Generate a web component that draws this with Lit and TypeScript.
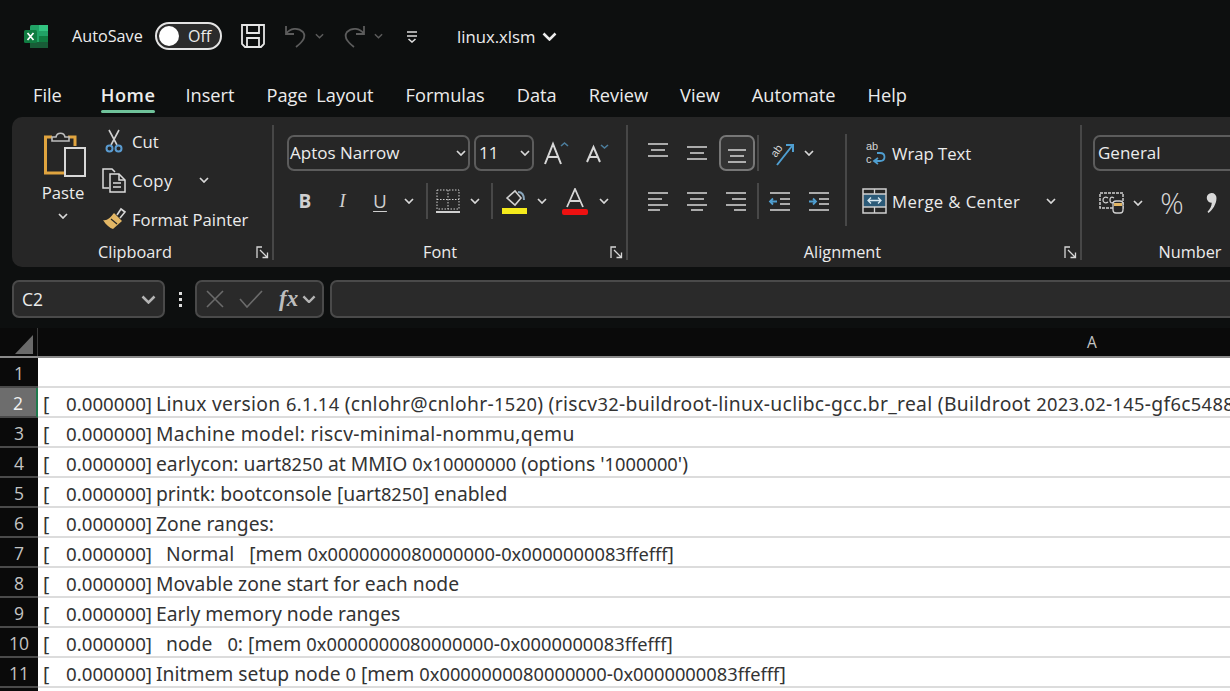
import { LitElement, html, css, svg } from 'lit';
import { customElement } from 'lit/decorators.js';

const TABS = ['File', 'Home', 'Insert', 'Page Layout', 'Formulas', 'Data', 'Review', 'View', 'Automate', 'Help'];

const ROWS = [
  '',
  'Linux version 6.1.14 (cnlohr@cnlohr-1520) (riscv32-buildroot-linux-uclibc-gcc.br_real (Buildroot 2023.02-145-gf6c5488',
  'Machine model: riscv-minimal-nommu,qemu',
  "earlycon: uart8250 at MMIO 0x10000000 (options '1000000')",
  'printk: bootconsole [uart8250] enabled',
  'Zone ranges:',
  '  Normal   [mem 0x0000000080000000-0x0000000083ffefff]',
  'Movable zone start for each node',
  'Early memory node ranges',
  '  node   0: [mem 0x0000000080000000-0x0000000083ffefff]',
  'Initmem setup node 0 [mem 0x0000000080000000-0x0000000083ffefff]',
];

const chev = (w = 10) => html`<svg class="chev" width=${w} height=${w * 0.6} viewBox="0 0 10 6"><path d="M1 1l4 4 4-4" fill="none" stroke="currentColor" stroke-width="1.7"/></svg>`;

const launcher = html`<svg class="launch" width="13" height="13" viewBox="0 0 13 13" fill="none" stroke="#d6d6d6" stroke-width="1.3"><path d="M6 1H1v5M1 1v11h0M4 4l7 7M6.5 11.5h5v-5"/></svg>`;

// lines of the alignment icons, y/width pairs per icon
const lines = (rows: number[][]) => html`<svg width="24" height="24" viewBox="0 0 24 24" stroke="#d8d8d8" stroke-width="1.6">${rows.map(
  ([y, x1, x2]) => svg`<line x1=${x1} x2=${x2} y1=${y} y2=${y}/>`
)}</svg>`;

const arrowLines = (flip: boolean) => html`<svg width="24" height="24" viewBox="0 0 24 24" stroke="#d8d8d8" stroke-width="1.6" fill="none">
  <line x1="2" x2="22" y1="4" y2="4"/><line x1="12" x2="22" y1="10" y2="10"/><line x1="12" x2="22" y1="15" y2="15"/><line x1="2" x2="22" y1="21" y2="21"/>
  <path d=${flip ? 'M2 12.5h7M6 9.5l3 3-3 3' : 'M9 12.5H2M5 9.5l-3 3 3 3'} stroke="#4f9ed0" stroke-width="1.8"/>
</svg>`;

// digits run narrower than letters in the sheet font
const cellText = (s: string) =>
  s.split(/(0x[0-9a-f]+|\d[\d.]*)/).map((part, i) => (i % 2 ? html`<span class="num">${part}</span>` : part));

@customElement('app-root')
export class AppRoot extends LitElement {
  static styles = css`
    :host {
      display: block;
      width: 1230px;
      height: 691px;
      overflow: hidden;
      background: #0d0f0f;
      color: #ececec;
      font-family: "Open Sans", "Noto Sans", sans-serif;
    }
    svg { display: block; flex: none; }
    .chev { color: #d8d8d8; }

    /* title bar */
    .title {
      height: 72px;
      display: flex;
      align-items: center;
      padding-left: 24px;
      box-sizing: border-box;
    }
    .autosave { font-size: 16.2px; margin-left: 23px; width: 83px; }
    .toggle {
      width: 67px;
      height: 28px;
      border: 2px solid #e4e4e4;
      border-radius: 15px;
      box-sizing: border-box;
      background: #2b2b2b;
      display: flex;
      align-items: center;
      padding-left: 2px;
      font-size: 16px;
    }
    .knob { width: 20px; height: 20px; border-radius: 50%; background: #fff; margin-right: 9px; }
    .save { margin-left: 18px; }
    .undo { margin-left: 18px; }
    .qchev { margin-left: 8px; color: #5c5c5c; }
    .redo { margin-left: 19px; }
    .qat { margin-left: 23px; }
    .file { margin-left: 39px; font-size: 16.7px; }
    .file + svg { margin-left: 7px; color: #ececec; }

    /* tabs */
    .tabs {
      height: 43px;
      display: flex;
      padding-left: 33px;
      gap: 32px;
      font-size: 18.2px;
      word-spacing: 4px;
      align-items: center;
      box-sizing: border-box;
      padding-top: 2px;
    }
    .tab { position: relative; line-height: 24px; }
    .tab.on { font-weight: 600; margin: 0 -2px 0 7px; letter-spacing: 0.5px; }
    .tab.on::after {
      content: '';
      position: absolute;
      left: 0;
      right: 0;
      bottom: -6px;
      height: 3px;
      border-radius: 2px;
      background: #6fc29a;
    }

    /* ribbon */
    .ribbon {
      margin: 2px 0 0 12px;
      height: 150px;
      box-sizing: border-box;
      padding: 8px 0 7px;
      background: #262626;
      border-radius: 10px 0 0 10px;
      display: flex;
      overflow: hidden;
      font-size: 16.7px;
    }
    .group {
      flex: none;
      height: 135px;
      box-sizing: border-box;
      border-right: 2px solid #474747;
      display: flex;
      flex-direction: column;
    }
    .g-clip { width: 262px; }
    .g-font { width: 354px; }
    .g-align { width: 454px; }
    .g-num { width: 216px; border-right: 0; }
    .body { height: 119px; flex: none; display: flex; box-sizing: border-box; }
    .foot { display: flex; align-items: center; height: 16px; font-size: 16.3px; font-weight: 500; }
    .foot span { flex: 1; text-align: center; }
    .foot svg { margin-right: 3px; }
    .g-clip .foot { padding-left: 2px; }
    .g-font .foot span { margin-right: 4px; }
    .g-align .foot span { margin-right: 7px; }

    /* clipboard */
    .g-clip .body { padding-left: 24px; }
    .paste {
      width: 54px;
      display: flex;
      flex-direction: column;
      align-items: center;
      padding-top: 6px;
    }
    .paste svg:first-child { margin-left: 4px; }
    .paste span { line-height: 20px; margin: 6px 0 10px; }
    .clip-list {
      margin-left: 10px;
      padding-top: 1px;
      display: flex;
      flex-direction: column;
      gap: 9px;
    }
    .clip-row { height: 30px; display: flex; align-items: center; white-space: nowrap; }
    .clip-ico { width: 32px; display: flex; justify-content: center; flex: none; margin: 0 2px 0 -2px; }
    .clip-row .chev { margin-left: 26px; }
    .copy { letter-spacing: 0.4px; }

    /* font */
    .g-font .body, .g-num .body { flex-direction: column; padding: 10px 0 0 13px; }
    .g-font .top { display: grid; grid-template-columns: 183px 64px 44px 38px; height: 36px; gap: 0; }
    .combo {
      height: 36px;
      box-sizing: border-box;
      border: 2px solid #5c5c5c;
      border-radius: 7px;
      display: flex;
      align-items: center;
      justify-content: space-between;
      padding: 0 2px 2px 1px;
      font-size: 17px;
      overflow: hidden;
      white-space: nowrap;
    }
    .combo .chev { margin-top: 2px; }
    .combo.size { margin-left: 4px; padding-left: 3px; }
    .cell { display: flex; align-items: center; justify-content: center; }
    .font-row {
      margin-top: 12px;
      height: 36px;
      display: grid;
      grid-template-columns: 36px 39px 36px 22px 14px 28px 25px 10px 34px 22px 44px 14px;
    }
    .fmt { font-size: 19px; color: #cfcfcf; font-family: "Liberation Serif", serif; }
    .bold { font-family: "Open Sans", sans-serif; font-weight: 700; }
    .ital { font-style: italic; font-family: "Liberation Serif", serif; }
    .und { font-family: "Open Sans", sans-serif; font-weight: 400; text-decoration: underline; text-underline-offset: 3px; }
    .vsep { width: 2px; height: 36px; background: #484848; }

    /* alignment */
    .g-align .body { padding: 10px 0 0 10px; }
    .align-rows { width: 200px; display: flex; flex-direction: column; gap: 12px; }
    .a1 { display: grid; height: 36px; grid-template-columns: 40px 38px 40px 4px 42px 14px; }
    .a2 { display: grid; height: 36px; grid-template-columns: 40px 38px 40px 4px 40px 38px; }
    .boxed {
      border: 2px solid #777;
      border-radius: 7px;
      background: #333;
      width: 36px;
      height: 36px;
      box-sizing: border-box;
      margin-left: 1px;
    }
    .bigsep { width: 2px; height: 92px; margin: -1px 0 0 7px; background: #484848; }
    .wrap-col { margin-left: 15px; display: flex; flex-direction: column; gap: 12px; width: 202px; }
    .wrap-row { height: 36px; display: flex; align-items: center; white-space: nowrap; }
    .wrap-row svg:first-child { margin-right: 5px; }
    .wrap-row .chev { margin-left: auto; margin-right: 8px; }
    .wrap-first { padding-left: 3px; }
    .merge { letter-spacing: 0.4px; }
    .ic-text { font: 400 11px "Liberation Sans", sans-serif; fill: #d4d4d4; }

    /* number */
    .g-num .body { padding-left: 11px; }
    .g-num .combo { width: 220px; padding-left: 3px; }
    .num-row { margin-top: 12px; height: 36px; display: grid; grid-template-columns: 36px 18px 50px 28px; }
    .pct { font-size: 29px; color: #d8d8d8; font-weight: 300; }

    /* formula bar */
    .fbar { display: flex; height: 38px; margin-top: 13px; padding-left: 12px; }
    .box {
      border: 2px solid #4a4a4a;
      border-radius: 7px;
      background: #2a2a2a;
      box-sizing: border-box;
      display: flex;
      align-items: center;
    }
    .name { width: 153px; justify-content: space-between; padding: 0 7px 0 8px; font-size: 17.5px; }
    .fbar .chev { color: #b4b4b4; }
    .dots { width: 30px; display: flex; flex-direction: column; align-items: center; justify-content: center; gap: 3px; }
    .dots i { width: 3px; height: 3px; background: #ddd; }
    .fx { width: 129px; padding: 0 3px 0 8px; }
    .fx-check { margin-left: 14px; }
    .fx-label { font: italic 700 23px "Liberation Serif", serif; color: #bdbdbd; margin: 0 3px 0 16px; width: 20px; }
    .finput { flex: 1; margin: 0 -10px 0 6px; }

    /* sheet */
    .colhead {
      margin-top: 10px;
      height: 30px;
      box-sizing: border-box;
      background: #0a0a0a;
      border-bottom: 2px solid #8a8a8a;
      display: flex;
    }
    .corner {
      width: 38px;
      flex: none;
      border-right: 1px solid #3c3c3c;
      display: flex;
      align-items: flex-end;
      justify-content: flex-end;
      padding-bottom: 2px;
      box-sizing: border-box;
    }
    .corner svg { margin-right: 4px; }
    .col-a { flex: none; width: 2108px; text-align: center; color: #c4c4c4; font-size: 15.5px; line-height: 29px; }
    .row { height: 30px; display: flex; background: #fff; }
    .rh {
      width: 38px;
      flex: none;
      box-sizing: border-box;
      background: #0a0a0a;
      border-bottom: 2px solid #4a4a4a;
      color: #c4c4c4;
      font-size: 17.5px;
      line-height: 31px;
      text-align: center;
    }
    .row.sel .rh {
      background: #6d6d6d;
      color: #f2f2f2;
      border-right: 2px solid #1f7a4d;
    }
    .cellrow {
      flex: 1;
      display: flex;
      box-sizing: border-box;
      border-bottom: 2px solid #dcdcdc;
      color: #333;
      font: 19.3px/31px "Noto Sans", sans-serif;
      white-space: pre;
      overflow: hidden;
      padding-left: 5px;
    }
    .br { width: 23px; flex: none; }
    .ts { width: 90px; flex: none; font-size: 18.7px; }
    .num { font-size: 18.3px; }
    .wide { letter-spacing: 0.31px; }
  `;

  render() {
    return html`
      ${this.renderTitle()}
      <div class="tabs">
        ${TABS.map(t => html`<div class="tab ${t === 'Home' ? 'on' : ''}">${t}</div>`)}
      </div>
      <div class="ribbon">
        ${this.renderClipboard()}
        ${this.renderFont()}
        ${this.renderAlignment()}
        ${this.renderNumber()}
      </div>
      ${this.renderFormulaBar()}
      <div class="colhead">
        <div class="corner"><svg width="18" height="19" viewBox="0 0 18 19"><path d="M18 0v19H0z" fill="#6a6a6a"/></svg></div>
        <div class="col-a">A</div>
      </div>
      ${ROWS.map((r, i) => html`
        <div class="row ${i === 1 ? 'sel' : ''}">
          <div class="rh">${i + 1}</div>
          <div class="cellrow">${r ? html`<span class="br">[</span><span class="ts">0.000000]</span><span class=${r.includes('riscv') ? 'wide' : ''}>${cellText(r)}</span>` : ''}</div>
        </div>
      `)}
      <div class="row"><div class="rh"></div><div class="cellrow"></div></div>
    `;
  }

  renderTitle() {
    return html`
      <div class="title">
        <svg width="25" height="25" viewBox="0 0 25 25">
          <rect x="6" y="1" width="18" height="23" rx="1.5" fill="#21a366"/>
          <rect x="15" y="1" width="9" height="6" fill="#33c481"/>
          <rect x="15" y="12" width="9" height="6" fill="#107c41"/>
          <rect x="6" y="18" width="18" height="6" fill="#185c37"/>
          <rect x="0" y="6" width="13" height="13" rx="1.5" fill="#107c41"/>
          <path d="M3.5 9l6 7M9.5 9l-6 7" stroke="#fff" stroke-width="1.7"/>
        </svg>
        <div class="autosave">AutoSave</div>
        <div class="toggle"><div class="knob"></div>Off</div>
        <svg class="save" width="26" height="26" viewBox="0 0 26 26" fill="none" stroke="#e6e6e6" stroke-width="1.8">
          <path d="M2 2h22v19l-3 3H5l-3-3z"/><path d="M7 2v8h12V2M7 24v-9h12v9"/>
        </svg>
        <svg class="undo" width="23" height="24" viewBox="0 0 23 24" fill="none" stroke="#5c5c5c" stroke-width="1.8">
          <path d="M2 2v8h8M2 10c4-6 12-7 17-2 3 4 1 9-7 15"/>
        </svg>
        <svg class="qchev" width="9" height="6" viewBox="0 0 10 6"><path d="M1 1l4 4 4-4" fill="none" stroke="#5c5c5c" stroke-width="1.6"/></svg>
        <svg class="redo" width="23" height="24" viewBox="0 0 23 24" fill="none" stroke="#5c5c5c" stroke-width="1.8">
          <path d="M21 2v8h-8M21 10c-4-6-12-7-17-2-3 4-1 9 7 15"/>
        </svg>
        <svg class="qchev" width="9" height="6" viewBox="0 0 10 6"><path d="M1 1l4 4 4-4" fill="none" stroke="#5c5c5c" stroke-width="1.6"/></svg>
        <svg class="qat" width="12" height="13" viewBox="0 0 12 13" fill="none" stroke="#dcdcdc" stroke-width="1.6">
          <path d="M1 2h10M1 6h10M2.5 9l3.5 3 3.5-3"/>
        </svg>
        <div class="file">linux.xlsm</div>
        ${chev(15)}
      </div>
    `;
  }

  renderClipboard() {
    return html`
      <div class="group g-clip">
        <div class="body">
          <div class="paste">
            <svg width="42" height="46" viewBox="0 0 42 46" fill="none">
              <path d="M8 6H1.5v36H22" stroke="#e0a43f" stroke-width="3"/>
              <path d="M24 6h7v9" stroke="#e0a43f" stroke-width="3"/>
              <path d="M8 10V6h4c1-5 8-5 9 0h4v4z" stroke="#bdbdbd" stroke-width="1.6" fill="#262626"/>
              <rect x="21" y="17" width="20" height="28" stroke="#d8d8d8" stroke-width="2"/>
            </svg>
            <span>Paste</span>
            ${chev()}
          </div>
          <div class="clip-list">
            <div class="clip-row">
              <div class="clip-ico">
                <svg width="18" height="24" viewBox="0 0 18 24" fill="none">
                  <path d="M4 1l8 15M14 1L6 16" stroke="#cfcfcf" stroke-width="1.6"/>
                  <circle cx="4.5" cy="19.5" r="3" stroke="#5a9bd0" stroke-width="2"/>
                  <circle cx="13.5" cy="19.5" r="3" stroke="#5a9bd0" stroke-width="2"/>
                </svg>
              </div>Cut
            </div>
            <div class="clip-row">
              <div class="clip-ico">
                <svg width="26" height="26" viewBox="0 0 26 26" fill="none" stroke="#dcdcdc" stroke-width="1.5">
                  <path d="M8 21H2V2h9l3 3"/><path d="M9 7h9l6 6v12H9z"/><path d="M18 7v6h6M12 16h8M12 20h8"/>
                </svg>
              </div><span class="copy">Copy</span> ${chev()}
            </div>
            <div class="clip-row">
              <div class="clip-ico">
                <svg width="25" height="24" viewBox="0 0 25 24" fill="none">
                  <path d="M15 8l4-6 4 3-5 6" stroke="#d6d6d6" stroke-width="1.6"/>
                  <path d="M12 6l8 8-9 8c-3-1-7-4-10-9 4 1 7-2 11-7z" fill="#e3b765"/>
                  <path d="M9 12l6 5" stroke="#262626" stroke-width="1.2"/>
                </svg>
              </div>Format Painter
            </div>
          </div>
        </div>
        <div class="foot"><span>Clipboard</span>${launcher}</div>
      </div>
    `;
  }

  renderFont() {
    return html`
      <div class="group g-font">
        <div class="body">
          <div class="top">
            <div class="combo">Aptos Narrow ${chev()}</div>
            <div class="combo size">11 ${chev()}</div>
            <div class="cell">
              <svg width="25" height="24" viewBox="0 0 25 24" fill="none">
                <path d="M1 23L9 3l8 20M4 16h10" stroke="#d6d6d6" stroke-width="2"/>
                <path d="M17 5l3.500-3 3.500 3" stroke="#4c7d9c" stroke-width="1.6"/>
              </svg>
            </div>
            <div class="cell">
              <svg width="23" height="20" viewBox="0 0 23 20" fill="none">
                <path d="M1 19L7.500 4 14 19M3.500 14h8" stroke="#d6d6d6" stroke-width="2"/>
                <path d="M15 2l3.500 3L22 2" stroke="#4c7d9c" stroke-width="1.600"/>
              </svg>
            </div>
          </div>
          <div class="font-row">
            <div class="cell fmt bold">B</div>
            <div class="cell fmt ital">I</div>
            <div class="cell fmt und">U</div>
            <div class="cell">${chev()}</div>
            <div class="cell"><div class="vsep"></div></div>
            <div class="cell">
              <svg width="24" height="24" viewBox="0 0 24 24" fill="none" stroke="#cfcfcf">
                <rect x="1" y="1" width="22" height="19" stroke-dasharray="1.500 1.500"/>
                <path d="M12 1v19M1 10.500h22" stroke-dasharray="1.500 1.500"/>
                <path d="M0 23h24" stroke-width="2"/>
              </svg>
            </div>
            <div class="cell">${chev()}</div>
            <div class="cell"><div class="vsep"></div></div>
            <div class="cell">
              <svg width="25" height="26" viewBox="0 0 25 26" fill="none">
                <path d="M5 10l8-7 6 7-6 7z" stroke="#cfcfcf" stroke-width="1.600"/>
                <path d="M16 4c4 0 6 3 6 8" stroke="#8aa6bb" stroke-width="2"/>
                <rect y="20" width="25" height="6" fill="#f4ea1c"/>
              </svg>
            </div>
            <div class="cell">${chev()}</div>
            <div class="cell">
              <svg width="26" height="27" viewBox="0 0 26 27" fill="none">
                <path d="M5 19L13 1l8 18M7.500 13h11" stroke="#d6d6d6" stroke-width="1.800"/>
                <rect y="21" width="26" height="6" rx="2" fill="#ee1111"/>
              </svg>
            </div>
            <div class="cell">${chev()}</div>
          </div>
        </div>
        <div class="foot"><span>Font</span>${launcher}</div>
      </div>
    `;
  }

  renderAlignment() {
    return html`
      <div class="group g-align">
        <div class="body">
          <div class="align-rows">
            <div class="a1">
              <div class="cell">${lines([[3, 2, 22], [9, 5, 19], [15, 2, 22]])}</div>
              <div class="cell">${lines([[6, 2, 22], [12, 5, 19], [18, 2, 22]])}</div>
              <div class="cell"><div class="boxed cell">${lines([[9, 3, 21], [15, 5, 19], [21, 3, 21]])}</div></div>
              <div class="cell"><div class="vsep"></div></div>
              <div class="cell">
                <svg width="28" height="26" viewBox="0 0 28 26" fill="none">
                  <path d="M10 25L25 6M19 5h7v7" stroke="#4f9ed0" stroke-width="2"/>
                  <text class="ic-text" transform="translate(9 18) rotate(-55)">ab</text>
                </svg>
              </div>
              <div class="cell">${chev()}</div>
            </div>
            <div class="a2">
              <div class="cell">${lines([[4, 2, 22], [10, 2, 16], [16, 2, 22], [21, 2, 14]])}</div>
              <div class="cell">${lines([[4, 2, 22], [10, 5, 19], [16, 2, 22], [21, 6, 18]])}</div>
              <div class="cell">${lines([[4, 2, 22], [10, 8, 22], [16, 2, 22], [21, 10, 22]])}</div>
              <div class="cell"><div class="vsep"></div></div>
              <div class="cell">${arrowLines(false)}</div>
              <div class="cell">${arrowLines(true)}</div>
            </div>
          </div>
          <div class="bigsep"></div>
          <div class="wrap-col">
            <div class="wrap-row wrap-first">
              <svg width="22" height="26" viewBox="0 0 22 26" fill="none">
                <text class="ic-text" x="1" y="10">ab</text>
                <text class="ic-text" x="1" y="23">c</text>
                <path d="M9 21h6c6 0 6-8 0-8h-3M13 18l-4 3 4 3" stroke="#4f9ed0" stroke-width="1.800"/>
              </svg>
              Wrap Text
            </div>
            <div class="wrap-row">
              <svg width="25" height="26" viewBox="0 0 25 26" fill="none">
                <rect x="1" y="1" width="23" height="24" stroke="#d0d0d0" stroke-width="1.500"/>
                <rect x="2" y="6" width="21" height="13" fill="#2b5a78"/>
                <path d="M1 6h23M1 19h23M12.500 1v5M12.500 19v6" stroke="#d0d0d0" stroke-width="1.300"/>
                <path d="M6 12.500h13M9 9.500l-3 3 3 3M16 9.500l3 3-3 3" stroke="#d8e8f0" stroke-width="1.300"/>
              </svg>
              <span class="merge">Merge &amp; Center</span> ${chev()}
            </div>
          </div>
        </div>
        <div class="foot"><span>Alignment</span>${launcher}</div>
      </div>
    `;
  }

  renderNumber() {
    return html`
      <div class="group g-num">
        <div class="body">
          <div class="combo">General</div>
          <div class="num-row">
            <div class="cell">
              <svg width="25" height="22" viewBox="0 0 25 22" fill="none">
                <rect x="1" y="1" width="23" height="15" stroke="#cfcfcf" stroke-width="1.500" stroke-dasharray="3 1"/>
                <path d="M9 6c-3-2-5 0-5 2s2 4 5 2M15 6c-3-2-4 0-4 2s1 4 4 2" stroke="#cfcfcf" stroke-width="1.300"/>
                <rect x="14" y="9" width="10" height="12" rx="3" fill="#262626" stroke="#d0d0d0" stroke-width="1.300"/>
                <path d="M15 11h8v3h-8z" fill="#e3b765"/>
              </svg>
            </div>
            <div class="cell">${chev()}</div>
            <div class="cell pct">%</div>
            <div class="cell">
              <svg width="11" height="22" viewBox="0 0 11 22">
                <path d="M5.500 1a4.800 4.800 0 0 1 5 5c0 6-4 12-8 15l-1-1.200c2.500-2.500 4-5 4.300-9A4.800 4.800 0 0 1 5.500 1z" fill="#d8d8d8"/>
              </svg>
            </div>
          </div>
        </div>
        <div class="foot"><span>Number</span></div>
      </div>
    `;
  }

  renderFormulaBar() {
    return html`
      <div class="fbar">
        <div class="box name">C2 ${chev(15)}</div>
        <div class="dots"><i></i><i></i><i></i></div>
        <div class="box fx">
          <svg width="20" height="20" viewBox="0 0 20 20"><path d="M2 2l16 16M18 2L2 18" stroke="#6b6b6b" stroke-width="1.600"/></svg>
          <svg class="fx-check" width="24" height="18" viewBox="0 0 24 18"><path d="M1 9l7 8L23 1" fill="none" stroke="#6b6b6b" stroke-width="1.600"/></svg>
          <span class="fx-label">fx</span>
          ${chev(14)}
        </div>
        <div class="box finput"></div>
      </div>
    `;
  }
}
